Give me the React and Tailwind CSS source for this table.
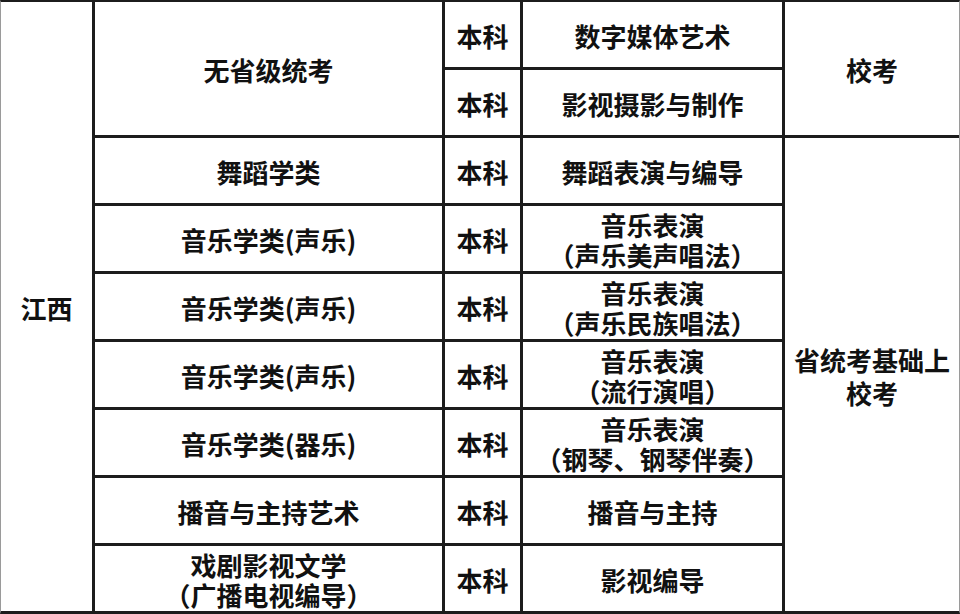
import React from "react";

const font = { fontFamily: '"Noto Sans CJK SC", "Noto Sans", sans-serif' };

function Cell({ className = "", children }) {
  return (
    <div
      className={`bg-white flex flex-col items-center justify-center text-center font-bold text-[26px] leading-[30px] text-[#111] pt-[3px] ${className}`}
    >
      {children}
    </div>
  );
}

export default function App() {
  return (
    <div className="w-[960px] h-[614px] bg-white" style={font}>
      <div className="w-[960px] h-[614px] border-l border-r border-l-[#9a9a9a] border-r-[#9a9a9a] border-t-2 border-b-[3px] border-t-[#1c1c1c] border-b-[#1c1c1c] bg-[#1c1c1c] grid grid-cols-[91px_347px_75px_259px_174px] grid-rows-[repeat(9,65px)] gap-[3px]">
        <Cell className="col-start-1 row-start-1 row-span-9">江西</Cell>

        <Cell className="col-start-2 row-start-1 row-span-2">无省级统考</Cell>
        <Cell className="col-start-3 row-start-1">本科</Cell>
        <Cell className="col-start-4 row-start-1">数字媒体艺术</Cell>
        <Cell className="col-start-5 row-start-1 row-span-2">校考</Cell>

        <Cell className="col-start-3 row-start-2">本科</Cell>
        <Cell className="col-start-4 row-start-2">影视摄影与制作</Cell>

        <Cell className="col-start-2 row-start-3">舞蹈学类</Cell>
        <Cell className="col-start-3 row-start-3">本科</Cell>
        <Cell className="col-start-4 row-start-3">舞蹈表演与编导</Cell>
        <Cell className="col-start-5 row-start-3 row-span-7 leading-[33px]">
          <span>省统考基础上</span>
          <span>校考</span>
        </Cell>

        <Cell className="col-start-2 row-start-4">音乐学类(声乐)</Cell>
        <Cell className="col-start-3 row-start-4">本科</Cell>
        <Cell className="col-start-4 row-start-4">
          <span>音乐表演</span>
          <span>（声乐美声唱法）</span>
        </Cell>

        <Cell className="col-start-2 row-start-5">音乐学类(声乐)</Cell>
        <Cell className="col-start-3 row-start-5">本科</Cell>
        <Cell className="col-start-4 row-start-5">
          <span>音乐表演</span>
          <span>（声乐民族唱法）</span>
        </Cell>

        <Cell className="col-start-2 row-start-6">音乐学类(声乐)</Cell>
        <Cell className="col-start-3 row-start-6">本科</Cell>
        <Cell className="col-start-4 row-start-6">
          <span>音乐表演</span>
          <span>（流行演唱）</span>
        </Cell>

        <Cell className="col-start-2 row-start-7">音乐学类(器乐)</Cell>
        <Cell className="col-start-3 row-start-7">本科</Cell>
        <Cell className="col-start-4 row-start-7">
          <span>音乐表演</span>
          <span>（钢琴、钢琴伴奏）</span>
        </Cell>

        <Cell className="col-start-2 row-start-8">播音与主持艺术</Cell>
        <Cell className="col-start-3 row-start-8">本科</Cell>
        <Cell className="col-start-4 row-start-8">播音与主持</Cell>

        <Cell className="col-start-2 row-start-9">
          <span>戏剧影视文学</span>
          <span>（广播电视编导）</span>
        </Cell>
        <Cell className="col-start-3 row-start-9">本科</Cell>
        <Cell className="col-start-4 row-start-9">影视编导</Cell>
      </div>
    </div>
  );
}
